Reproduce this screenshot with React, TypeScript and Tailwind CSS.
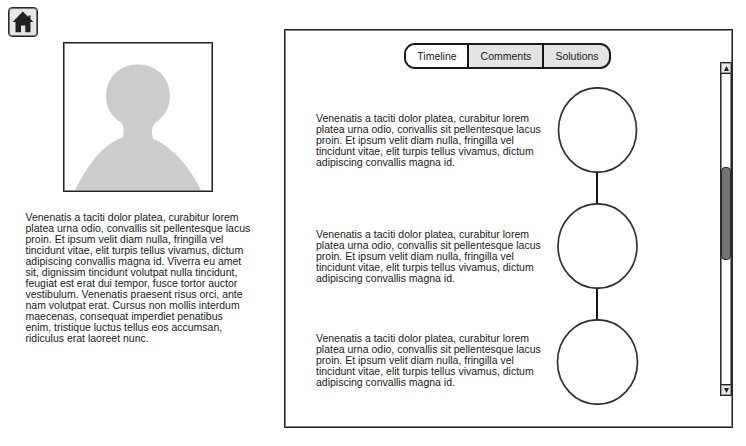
const bioLines = [
  'Venenatis a taciti dolor platea, curabitur lorem',
  'platea urna odio, convallis sit pellentesque lacus',
  'proin. Et ipsum velit diam nulla, fringilla vel',
  'tincidunt vitae, elit turpis tellus vivamus, dictum',
  'adipiscing convallis magna id. Viverra eu amet',
  'sit, dignissim tincidunt volutpat nulla tincidunt,',
  'feugiat est erat dui tempor, fusce tortor auctor',
  'vestibulum. Venenatis praesent risus orci, ante',
  'nam volutpat erat. Cursus non mollis interdum',
  'maecenas, consequat imperdiet penatibus',
  'enim, tristique luctus tellus eos accumsan,',
  'ridiculus erat laoreet nunc.',
];

const entryLines = [...bioLines.slice(0, 4), 'adipiscing convallis magna id.'];

function Paragraph({ lines }: { lines: string[] }) {
  return (
    <p className="text-[10.5px] leading-[11px] whitespace-nowrap">
      {lines.map((line) => (
        <span key={line} className="block">{line}</span>
      ))}
    </p>
  );
}

function HomeButton() {
  return (
    <button className="ml-2 mt-[7px] flex size-[30px] items-center justify-center rounded-[4px] border border-[#2a2a2a] bg-[#e6e6e6] shadow-[inset_0_0_0_1px_#777]" aria-label="Home">
      <svg width="22" height="22" viewBox="0 0 22 22" fill="#222">
        <path d="M10.800 .6 .6 10.900h2.900V21.300H9V14.500h4.300v6.800h5.200V10.900h2.900L18.500 8V4.500H16.300v1.400z" />
      </svg>
    </button>
  );
}

function Avatar() {
  return (
    <div className="ml-[63px] mt-[5px] size-[150px] border border-[#222] shadow-[inset_0_0_0_1px_#888]">
      <svg width="148" height="148" viewBox="64 43 148 148" fill="#ccc">
        <path d="M75.3 190C86 168 101 145 122.600 137.500C124 134 124.500 126 121.500 123C111.500 116.500 106 107.500 106 96.500C106 78 119 64.400 138 64.400S170 78 170 96.500C170 107.500 164.500 116.500 155 123C151 127 151.500 135 153.500 139C174 148 190 168 201 190Z" />
      </svg>
    </div>
  );
}

function Tabs() {
  return (
    <div className="ml-[119px] flex h-[26px] w-[207px] overflow-hidden rounded-[11px] border-2 border-[#1c1c1c] bg-[#e4e4e4] text-[10.5px] leading-[23px]">
      <button className="w-[63px] border-r-2 border-[#151515] bg-white pl-px">Timeline</button>
      <button className="w-[75px] border-r-2 border-[#151515] pl-px">Comments</button>
      <button className="flex-1 pl-px">Solutions</button>
    </div>
  );
}

function Node({ offset, wide, last }: { offset: string; wide?: string; last?: boolean }) {
  return (
    <div className="flex h-[116px]">
      <div className={`w-[240px] shrink-0 ${offset}`}>
        <Paragraph lines={entryLines} />
      </div>
      <div className="flex w-[83px] flex-col items-start">
        <svg className="h-[86px] w-[83px] shrink-0" viewBox="0 0 83 86" fill="white" stroke="#333" strokeWidth="1.7">
          <ellipse cx="41.500" cy="43" rx={wide ?? '39.500'} ry="42.200" />
        </svg>
        {!last && <div className="ml-[40px] h-[30px] w-[2px] bg-[#151515]" />}
      </div>
    </div>
  );
}

function ScrollBar() {
  return (
    <div className="mt-[32px] flex h-[334px] w-[13px] shrink-0 flex-col border-l border-r-2 border-[#2a2a2a] bg-white shadow-[inset_1px_0_0_#888,inset_-1px_0_0_#888]">
      <div className="flex h-3 items-center justify-center border-y border-[#222] bg-[#e6e6e6] shadow-[inset_0_0_0_1px_#999]">
        <svg width="5" height="5" viewBox="0 0 5 5" fill="#222"><path d="M2.500 0 5 5H0z" /></svg>
      </div>
      <div className="mt-[93px] h-[93px] rounded-[4px] border border-[#2a2a2a] bg-[#737373]" />
      <div className="mt-auto flex h-3 items-center justify-center border-y border-[#222] bg-[#e6e6e6] shadow-[inset_0_0_0_1px_#999]">
        <svg width="5" height="5" viewBox="0 0 5 5" fill="#222"><path d="M0 0h5L2.500 5z" /></svg>
      </div>
    </div>
  );
}

export default function App() {
  return (
    <main className="flex h-[446px] w-[746px] overflow-hidden bg-white font-['Liberation_Sans',Arial,sans-serif] text-[#1a1a1a]">
      <aside className="w-[284px] shrink-0">
        <HomeButton />
        <Avatar />
        <div className="ml-[25.500px] mt-[20px]">
          <Paragraph lines={bioLines} />
        </div>
      </aside>
      <section className="mt-[29px] flex h-[399px] w-[449px] border border-[#222] shadow-[inset_0_0_0_1px_#888]">
        <div className="w-[435px] shrink-0 pt-[13px]">
          <Tabs />
          <div className="ml-[31px] mt-[18px]">
            <Node offset="pt-[26px]" wide="39" />
            <Node offset="pt-[26px]" />
            <Node offset="pt-[14px]" wide="40" last />
          </div>
        </div>
        <ScrollBar />
      </section>
    </main>
  );
}
